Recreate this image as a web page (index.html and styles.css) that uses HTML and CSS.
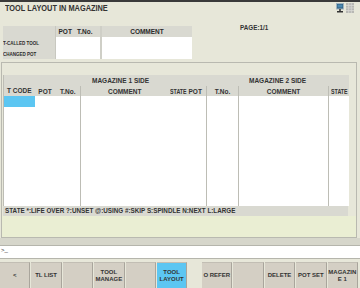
FILE: index.html
```html
<!DOCTYPE html>
<html>
<head>
<meta charset="utf-8">
<link rel="stylesheet" href="styles.css">
</head>
<body>
<div class="screen">
  <div class="topstrip"></div>
  <div class="header">
    <div class="title"><span class="cond">TOOL LAYOUT IN MAGAZINE</span></div>
    <div class="icons">
      <svg width="8" height="10" viewBox="0 0 8 10"><rect x="0.5" y="0.5" width="7" height="5.5" fill="#2f5f80" stroke="#9fb3c0"/><rect x="1.5" y="1.5" width="5" height="3" fill="#4a88b0"/><rect x="3" y="6" width="2" height="2" fill="#555"/><rect x="1" y="8" width="6" height="1.5" fill="#333"/></svg>
      <svg width="8" height="10" viewBox="0 0 8 10"><rect x="0" y="0" width="8" height="10" fill="#b8b8b4"/><path d="M0 2.5H8M0 5H8M0 7.5H8M2.7 0V10M5.3 0V10" stroke="#d8d8d4" stroke-width="0.8"/></svg>
    </div>
  </div>
  <div class="pagerow"><span class="page">PAGE:1/1</span></div>
  <table class="small">
    <colgroup><col class="c-lbl"><col class="c-pot"><col class="c-tno"><col class="c-com"></colgroup>
    <tr class="hd"><td class="lbl"></td><td class="pl">POT</td><td class="pr">T.No.</td><td class="com">COMMENT</td></tr>
    <tr class="bd"><td class="lbl"><span class="cond">T-CALLED TOOL</span></td><td class="pl"></td><td class="pr"></td><td class="com"></td></tr>
    <tr class="bd"><td class="lbl"><span class="cond">CHANGED POT</span></td><td class="pl"></td><td class="pr"></td><td class="com"></td></tr>
  </table>
  <div class="frame">
    <table class="big">
      <colgroup>
        <col style="width:31px"><col style="width:21px"><col style="width:25px"><col style="width:88px"><col style="width:18px"><col style="width:20px"><col style="width:32px"><col style="width:90px"><col style="width:20px">
      </colgroup>
      <thead>
        <tr class="h1"><th rowspan="2" class="tc vl">T CODE</th><th colspan="5">MAGAZINE 1 SIDE</th><th colspan="3">MAGAZINE 2 SIDE</th></tr>
        <tr class="h2"><th class="nl">POT</th><th class="nl">T.No.</th><th class="vl">COMMENT</th><th class="st"><span class="cond">STATE</span></th><th class="lp">POT</th><th class="vl">T.No.</th><th class="vl">COMMENT</th><th class="vl st2"><span class="cond">STATE</span></th></tr>
      </thead>
      <tbody>
        <tr><td class="vl sel"></td><td></td><td></td><td class="vl"></td><td></td><td></td><td class="vl"></td><td class="vl"></td><td class="vl"></td></tr>
        <tr><td class="vl"></td><td></td><td></td><td class="vl"></td><td></td><td></td><td class="vl"></td><td class="vl"></td><td class="vl"></td></tr>
        <tr><td class="vl"></td><td></td><td></td><td class="vl"></td><td></td><td></td><td class="vl"></td><td class="vl"></td><td class="vl"></td></tr>
        <tr><td class="vl"></td><td></td><td></td><td class="vl"></td><td></td><td></td><td class="vl"></td><td class="vl"></td><td class="vl"></td></tr>
        <tr><td class="vl"></td><td></td><td></td><td class="vl"></td><td></td><td></td><td class="vl"></td><td class="vl"></td><td class="vl"></td></tr>
        <tr><td class="vl"></td><td></td><td></td><td class="vl"></td><td></td><td></td><td class="vl"></td><td class="vl"></td><td class="vl"></td></tr>
        <tr><td class="vl"></td><td></td><td></td><td class="vl"></td><td></td><td></td><td class="vl"></td><td class="vl"></td><td class="vl"></td></tr>
        <tr><td class="vl"></td><td></td><td></td><td class="vl"></td><td></td><td></td><td class="vl"></td><td class="vl"></td><td class="vl"></td></tr>
        <tr><td class="vl"></td><td></td><td></td><td class="vl"></td><td></td><td></td><td class="vl"></td><td class="vl"></td><td class="vl"></td></tr>
        <tr><td class="vl"></td><td></td><td></td><td class="vl"></td><td></td><td></td><td class="vl"></td><td class="vl"></td><td class="vl"></td></tr>
      </tbody>
    </table>
    <div class="legend">STATE *:LIFE OVER ?:UNSET @:USING #:SKIP S:SPINDLE N:NEXT L:LARGE</div>
    <div class="green"></div>
  </div>
  <div class="inputbar"></div>
  <div class="input">&gt;_</div>
  <div class="softkeys">
    <div class="grp">
      <div class="sk">&lt;</div>
      <div class="sk">TL LIST</div>
      <div class="sk"></div>
      <div class="sk">TOOL<br>MANAGE</div>
      <div class="sk"></div>
      <div class="sk active">TOOL<br>LAYOUT</div>
    </div>
    <div class="grp">
      <div class="sk">O REFER</div>
      <div class="sk"></div>
      <div class="sk">DELETE</div>
      <div class="sk">POT SET</div>
      <div class="sk">MAGAZIN<br>E 1</div>
    </div>
  </div>
</div>
</body>
</html>
```

FILE: styles.css
```css
* { box-sizing: border-box; }
html, body { margin: 0; padding: 0; }
body {
  width: 360px;
  height: 288px;
  overflow: hidden;
  background: #e7e7d9;
  font-family: "Liberation Sans", Arial, sans-serif;
  font-weight: bold;
  color: #2a2a2a;
}
.cond { display: inline-block; transform: scaleX(0.82); transform-origin: left center; white-space: nowrap; }
.screen { display: flex; flex-direction: column; width: 360px; height: 288px; }
.topstrip { height: 2px; background: #3a3a3a; }
.header { height: 14px; display: flex; justify-content: space-between; align-items: flex-start; padding: 0 6px 0 5px; }
.title { font-size: 9px; line-height: 12px; color: #333; }
.icons { display: flex; gap: 2px; padding-top: 1px; }
.pagerow { height: 10px; padding-left: 240px; }
.page { font-size: 6.3px; line-height: 10px; color: #333; }

.small { border-collapse: collapse; table-layout: fixed; width: 189px; margin-left: 3px; font-size: 6.5px; }
.small .c-lbl { width: 52px; }
.small .c-pot { width: 22px; }
.small .c-tno { width: 24px; }
.small .c-com { width: 91px; }
.small td { padding: 0; }
.small .hd td { height: 11px; background: #d9d9d1; }
.small .bd td { height: 11px; background: #fff; }
.small td.lbl { background: #d9d9d1; font-size: 5.5px; padding-left: 0; border-right: 1px solid #c8c8c0; }
.small td.pl { padding-left: 3px; }
.small td.pr { padding-left: 0; border-right: 2px solid #cfcfc7; }
.small td.com { text-align: center; }

.frame { margin-top: 3px; height: 176px; margin-left: 1px; margin-right: 3px; border: 1px solid #b9b9b0; display: flex; flex-direction: column; padding-left: 1px; }
.big { border-collapse: collapse; table-layout: fixed; width: 345px; font-size: 6.5px; margin-top: 12px; }
.big th { background: #d9d9d1; padding: 0; font-weight: bold; color: #333; white-space: nowrap; overflow: hidden; }
.big .h1 th { height: 11px; }
.big .h2 th { height: 10px; }
.big th.tc { vertical-align: bottom; padding-bottom: 2px; }
.big th.st { text-align: left; padding-left: 1px; }
.big th.st2 { text-align: left; padding-left: 2px; }
.big th.lp { text-align: left; padding-left: 2px; }
.big .vl { border-left: 1px solid #bdbdb5; }
.big td { height: 11px; padding: 0; background: #fff; }
.big td.sel { background: #5cc6f2; }
.legend { height: 10px; width: 345px; background: #d9d9d1; font-size: 6.3px; line-height: 10px; padding-left: 2px; color: #333; }
.green { flex: 1; background: #eaeed3; margin-left: -1px; }
.inputbar { height: 8px; background: #d6d6cb; border-bottom: 1px solid #b5b5ac; }
.input { height: 13px; background: #fff; border-bottom: 1px solid #b5b5ac; font-size: 6px; line-height: 9px; font-weight: normal; padding-left: 1px; }
.softkeys { margin-top: 3px; flex: 1; display: flex; justify-content: space-between; padding-right: 2px; }
.grp { display: flex; gap: 1px; }
.sk { width: 30.4px; background: #d4cfc4; border-right: 1px solid #a9a59c; border-top: 1px solid #c2beb4; display: flex; align-items: center; justify-content: center; text-align: center; font-size: 6px; line-height: 7px; color: #333; }
.sk.active { background: #5cc6f2; }
```
